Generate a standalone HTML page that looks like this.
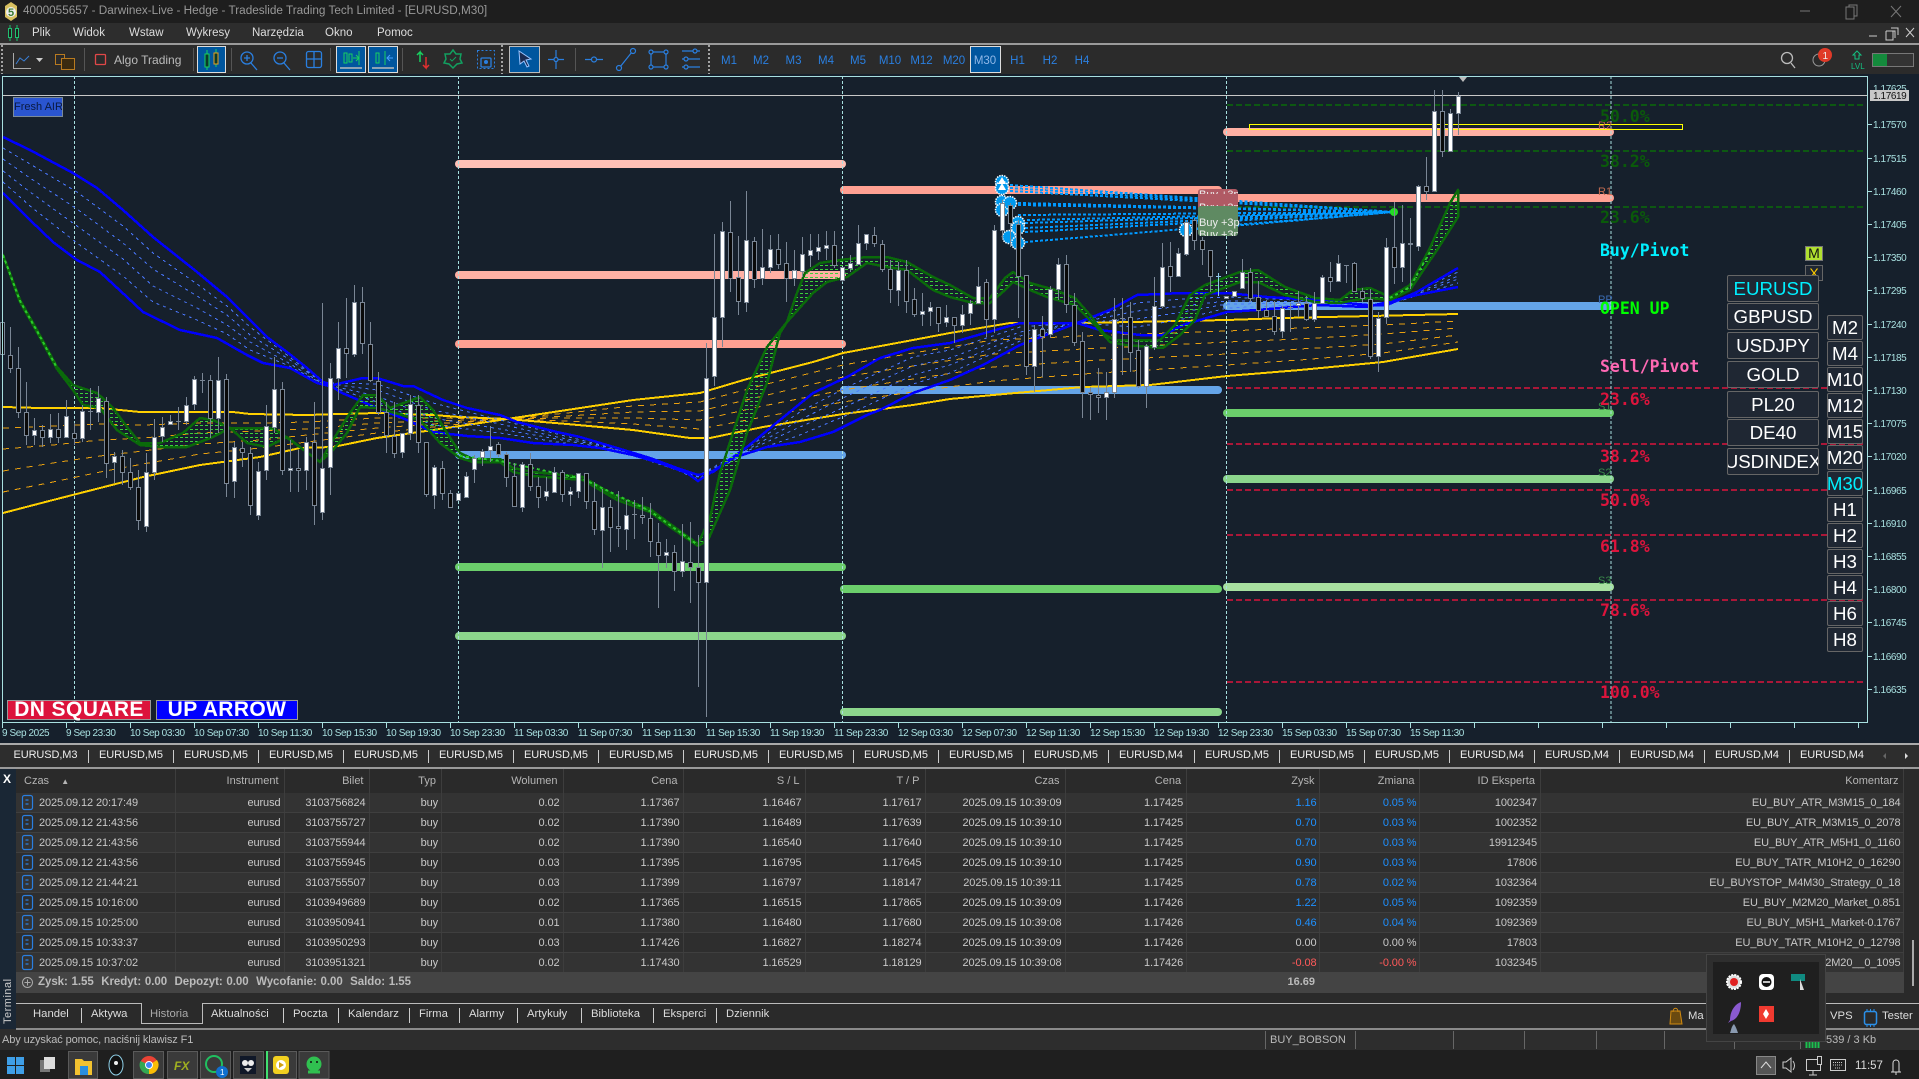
<!DOCTYPE html>
<html><head><meta charset="utf-8"><title>MT5</title>
<style>
html,body{margin:0;padding:0;background:#2d2d2d}
body{width:1919px;height:1079px;overflow:hidden;position:relative;font-family:"Liberation Sans",sans-serif;color:#ccc}
.a{position:absolute}
.t{position:absolute;white-space:nowrap;font-size:11.5px;line-height:14px}
.m{color:#ddd;top:26px}
.tab{position:absolute;top:748px;font-size:11px;color:#eee;white-space:nowrap;line-height:14px;letter-spacing:-.1px}
.pb,.tb{position:absolute;background:#1f2733;border:1px solid #666;box-sizing:border-box;color:#fff;font-size:18.7px;text-align:center;overflow:hidden;white-space:nowrap;border-radius:2px;display:flex;justify-content:center}
.pb{left:1727px;width:92px;height:27px;line-height:25px}
.tb{left:1827px;width:36px;height:25px;line-height:23px}
table{border-collapse:collapse;table-layout:fixed;position:absolute;left:16px;top:769px;width:1888px;font-size:11px;color:#c8c8c8}
td,th{padding:0 3px 0 0;text-align:right;font-weight:normal;white-space:nowrap;overflow:hidden;border-right:1px solid #3d3d3d}
th{height:24px;background:#2a2a2a;color:#b5b5b5;padding-right:5px}
td{height:19px;border-bottom:1px solid #3f3f3f;background:#2e2e2e;letter-spacing:-.1px}
tr.o td{background:#333}
td.b{color:#1e90ff}td.r{color:#ff5a5a}
td:first-child,th:first-child{text-align:left;padding-left:23px}
.bt{position:absolute;top:1007px;font-size:11.3px;color:#ddd;line-height:14px;white-space:nowrap}
</style></head><body>

<div class="a" style="left:0;top:0;width:1919px;height:23px;background:#1e1e1e"></div>
<svg class="a" style="left:2px;top:2px" width="18" height="20"><path d="M9 0l6 4v11l-6 4-6-4V4z" fill="#d8c060"/><circle cx="9" cy="10" r="5" fill="#eee"/><text x="6" y="14" font-size="11" font-weight="bold" fill="#3a7a30" font-family="Liberation Sans">5</text></svg>
<div class="t" style="left:23px;top:4px;color:#989898;font-size:11.75px">4000055657 - Darwinex-Live - Hedge - Tradeslide Trading Tech Limited - [EURUSD,M30]</div>

<div class="a" style="left:0;top:23px;width:1919px;height:20px;background:#2d2d2d"></div>
<svg class="a" style="left:7px;top:25px" width="14" height="16"><path d="M3 0v16M10 0v16" stroke="#20c070"/><rect x="1.5" y="3.5" width="3" height="9" fill="#1e1e1e" stroke="#20c070"/><rect x="8.5" y="3.5" width="3" height="9" fill="#1e1e1e" stroke="#20c070"/></svg>
<div class="t m" style="left:32px">Plik</div><div class="t m" style="left:73px">Widok</div><div class="t m" style="left:129px">Wstaw</div><div class="t m" style="left:186px">Wykresy</div><div class="t m" style="left:252px">Narzędzia</div><div class="t m" style="left:325px">Okno</div><div class="t m" style="left:377px">Pomoc</div>
<div class="a" style="left:0;top:43px;width:1919px;height:2px;background:#9a9a9a"></div>

<!-- window buttons -->
<svg class="a" style="left:1790px;top:0" width="129" height="45" fill="none" stroke="#777"><path d="M10 11h10M56 7h8v12h-8zM59 7V5h8v11h-3M101 6l10 11M111 6l-10 11"/><path stroke="#ccc" d="M79 36h8M96 31h9v7M101 28h7v7M96 31v9h7v-9M116 28l8 9M124 28l-8 9"/></svg>

<!-- toolbar -->
<svg class="a" style="left:0;top:45px" width="1919" height="29" viewBox="0 45 1919 29">
<rect x="0" y="45" width="1919" height="29" fill="#2b2b2b"/>
<g stroke="#ccc" stroke-dasharray="2 2" stroke-width="1.5"><path d="M2 45v29M502 45v29M709 45v29"/></g>
<g stroke="#555"><path d="M84.500 48v23M193.500 48v23M231.500 48v23M330.500 48v23M402.500 48v23M575.500 48v23"/></g>
<path d="M13.500 53v15.500H31" stroke="#aaa" fill="none"/><path d="M16 64l4-6 4 3 5-5" stroke="#3a7fd5" fill="none"/><path d="M36 58h7l-3.500 4z" fill="#ccc"/>
<rect x="55.500" y="54.500" width="9" height="10" fill="none" stroke="#b87a20"/><rect x="61.500" y="58.500" width="13" height="11" fill="#3a2a10" stroke="#b87a20"/>
<rect x="95.500" y="54.500" width="10" height="10" rx="1" fill="none" stroke="#e04848" stroke-width="1.300"/>
<text x="114" y="64" font-family="Liberation Sans" font-size="12" fill="#bbb">Algo Trading</text>
<rect x="197.500" y="46.500" width="28" height="26" fill="#00569e" stroke="#ddd"/><path d="M207 50v20M216 49v18" stroke="#18d060"/><rect x="205" y="54" width="4" height="13" fill="#0a3a2a" stroke="#18d060"/><rect x="214" y="53" width="4" height="11" fill="#0a3a2a" stroke="#e8a020"/>
<g fill="none" stroke="#2a7fe0" stroke-width="1.300"><circle cx="247" cy="58" r="6"/><path d="M251 63l6 7M244 58h6M247 55v6"/><circle cx="280" cy="58" r="6"/><path d="M284 63l6 7M277 58h6"/><rect x="306.500" y="51.500" width="15" height="16" rx="2"/><path d="M314 52v15M307 59h14"/></g>
<rect x="336.500" y="46.500" width="29" height="26" fill="#00569e" stroke="#ddd"/><rect x="368.500" y="46.500" width="29" height="26" fill="#00569e" stroke="#ddd"/>
<path d="M340 68h22M372 68h22" stroke="#bbb" stroke-width="1.500"/>
<g fill="none" stroke="#18d060"><rect x="344" y="53" width="3" height="10"/><rect x="349" y="54" width="3" height="8"/><rect x="376" y="53" width="3" height="10"/><path d="M353 58h6M359 51v14M385 51v14"/></g><path d="M356 55l3 3-3 3" stroke="#18d060" fill="none"/><path d="M393 58h-6m3-3l-3 3 3 3" stroke="#49a0ff" fill="none"/>
<path d="M420 62V52l-3 3m3-3l3 3" stroke="#18d060" fill="none" stroke-width="1.500"/><path d="M426 57v11l-3-3m3 3l3-3" stroke="#e03030" fill="none" stroke-width="1.500"/>
<path d="M453 50l3 4h5l-1 5 2 4-5 1-4 4-4-4-5-1 2-4-1-5h5z" fill="none" stroke="#12a060" stroke-width="1.500"/><path d="M450 59l2 2 4-4" stroke="#12a060" fill="none"/>
<rect x="477.500" y="50.500" width="17" height="18" fill="none" stroke="#2a7fe0" stroke-dasharray="2 2"/><rect x="481" y="58" width="10" height="9" rx="1" fill="none" stroke="#2a7fe0" stroke-width="1.300"/><circle cx="486" cy="62" r="2" fill="#2a7fe0"/>
<rect x="509.500" y="46.500" width="30" height="26" fill="#00569e" stroke="#bbb"/><path d="M519 51l12 8-5 1 3 6-2 1-3-6-4 3z" fill="#1a2a50" stroke="#9bc4ff"/>
<g stroke="#2a7fe0" fill="none" stroke-width="1.200"><path d="M556 50v19M548 59.500h16"/><circle cx="556" cy="59.500" r="2" fill="#2b2b2b"/><path d="M585 59.500h18"/><circle cx="594" cy="59.500" r="2.500" fill="#2b2b2b"/><path d="M620 67l12-15"/><circle cx="619" cy="68" r="2.500" fill="#2b2b2b"/><circle cx="633" cy="51" r="2.500" fill="#2b2b2b"/><rect x="651" y="52" width="15" height="15"/><g fill="#2b2b2b"><circle cx="651" cy="52" r="2"/><circle cx="666" cy="52" r="2"/><circle cx="651" cy="67" r="2"/><circle cx="666" cy="67" r="2"/></g><path d="M682 51h18M682 59h18M682 67h18"/><circle cx="686" cy="59" r="2" fill="#2b2b2b"/><circle cx="695" cy="51" r="2" fill="#2b2b2b"/><circle cx="686" cy="67" r="2" fill="#2b2b2b"/></g>
<rect x="970.500" y="46.500" width="30" height="26" fill="#00569e" stroke="#ddd"/>
<g font-family="Liberation Sans" font-size="11.500" fill="#2a7fe0" text-anchor="middle"><text x="729" y="64">M1</text><text x="761" y="64">M2</text><text x="793.500" y="64">M3</text><text x="826" y="64">M4</text><text x="858" y="64">M5</text><text x="890" y="64">M10</text><text x="921.500" y="64">M12</text><text x="954" y="64">M20</text><text x="985" y="64" fill="#8fb8e8">M30</text><text x="1017.500" y="64">H1</text><text x="1050" y="64">H2</text><text x="1082" y="64">H4</text></g>
<circle cx="1787" cy="58" r="5.500" fill="none" stroke="#bbb" stroke-width="1.300"/><path d="M1791 63l4 5" stroke="#bbb" stroke-width="1.300"/>
<circle cx="1819" cy="60" r="6" fill="none" stroke="#999"/><circle cx="1825" cy="55" r="7" fill="#e03a28"/><text x="1822.500" y="59" font-family="Liberation Sans" font-size="10" fill="#eee">1</text>
<path d="M1857 51l4 4h-2v4h-4v-4h-2z" fill="none" stroke="#14c080"/><text x="1851" y="69" font-family="Liberation Sans" font-size="8" fill="#14c080">LVL</text>
<rect x="1872.500" y="53.500" width="41" height="13" fill="#333" stroke="#777"/><rect x="1873" y="54" width="14" height="12" fill="#148a3c"/>
</svg>

<!-- chart -->
<svg class="a" style="left:0;top:74px" width="1919" height="671" viewBox="0 74 1919 671">
<defs>
<pattern id="pg" width="5" height="4" patternUnits="userSpaceOnUse"><path d="M0 1.500h3" stroke="#3ad03a" shape-rendering="crispEdges"/></pattern>
<clipPath id="c1"><rect x="1198" y="190" width="40" height="4"/></clipPath>
<clipPath id="c2"><rect x="1198" y="203" width="40" height="3"/></clipPath>
<clipPath id="c3"><rect x="1198" y="229" width="40" height="7"/></clipPath>
</defs>
<rect x="0" y="74" width="1919" height="671" fill="#16202c"/>
<!-- pivots -->
<g stroke-width="8" stroke-linecap="round" fill="none">
<path d="M459 164H842" stroke="#ffc0b6"/><path d="M459 275H842" stroke="#ffb0a4"/><path d="M459 344H842" stroke="#ffa092"/><path d="M459 455H842" stroke="#64a4e8"/><path d="M459 567H842" stroke="#6bce6b"/><path d="M459 636H842" stroke="#8cd68c"/>
<path d="M844 190H1218" stroke="#ffa092"/><path d="M844 390H1218" stroke="#64a4e8"/><path d="M844 589H1218" stroke="#6bce6b"/><path d="M844 712H1218" stroke="#8cd68c"/>
<path d="M1227 132H1610" stroke="#ffb0a4"/><path d="M1227 198H1610" stroke="#ffa092"/><path d="M1227 306H1610" stroke="#64a4e8"/><path d="M1227 413H1610" stroke="#6bce6b"/><path d="M1227 479H1610" stroke="#8cd68c"/><path d="M1227 587H1610" stroke="#a8e0a0"/>
</g>
<!-- fibs -->
<g fill="none" stroke-width="1.500" stroke-dasharray="6 3"><path d="M1227 105H1866M1227 151H1866M1227 207H1866" stroke="#0a6a0a"/><path d="M1227 388H1866M1227 444H1866M1227 490H1866M1227 535H1866M1227 600H1866M1227 682H1866" stroke="#dc143c"/></g>
<rect x="1249.500" y="124.500" width="433" height="5" fill="none" stroke="#ffff00"/>
<!-- grid vertical -->
<path d="M74.500 76V722M458.500 76V722M842.500 76V722M1226.500 76V722M1611 76V722" stroke="#a8e0e0" stroke-dasharray="3 2" fill="none"/>
<path d="M3 95.500H1867" stroke="#c8c8c8"/>
<!-- yellow band -->
<g fill="none" shape-rendering="crispEdges">
<g stroke="#e8a010" stroke-dasharray="6 6">
<polyline points="3,428 53,426 100,424 143,425 200,423 260,423 307,422 377,418 433,418 507,419 567,413 633,406 700,402 763,385 843,365 913,353 993,340 1083,336 1227,331 1300,328 1383,325 1458,321"/>
<polyline points="3,449 53,445 100,440 143,438 200,433 260,431 307,429 377,423 433,421 507,419 567,416 633,412 700,411 763,396 843,377 913,366 993,354 1083,349 1227,342 1300,339 1383,334 1458,328"/>
<polyline points="3,471 53,463 100,456 143,451 200,444 260,440 307,435 377,428 433,424 507,419 567,418 633,418 700,420 763,406 843,390 913,379 993,367 1083,361 1227,354 1300,349 1383,344 1458,335"/>
<polyline points="3,492 53,482 100,472 143,464 200,454 260,448 307,442 377,433 433,427 507,419 567,421 633,424 700,429 763,417 843,402 913,392 993,381 1083,374 1227,365 1300,360 1383,353 1458,342"/>
</g>
<g stroke="#ffd000" stroke-width="2">
<polyline points="3,407 40,408 100,408 140,412 200,412 233,412 250,414 307,415 377,413 433,415 460,417 507,419 567,410 633,400 700,393 747,379 813,362 843,353 913,340 950,333 1010,323 1083,323 1227,320 1283,318 1458,314"/>
<polyline points="3,513 53,500 100,488 143,477 200,465 260,457 300,448 333,447 377,438 433,430 460,426 507,419 567,424 633,430 690,438 710,438 763,427 843,414 913,405 950,399 993,395 1083,387 1150,385 1227,376 1300,370 1383,362 1458,349"/>
</g>
<!-- blue band -->
<g stroke="#4a78ff" stroke-dasharray="3 4">
<polyline points="3,148 30,164 77,192 123,226 153,253 197,284 227,306 250,327 287,355 323,383 377,384 433,403 500,420 557,434 617,449 677,468 698,476 747,448 800,412 847,387 913,357 950,350 1020,327 1077,323 1137,303 1183,299 1227,297 1317,301 1387,305 1458,272"/>
<polyline points="3,159 30,178 77,209 123,243 153,269 197,296 227,315 250,335 287,358 323,383 377,390 433,410 500,424 557,437 617,449 677,469 698,477 747,450 800,420 847,396 913,366 950,358 1020,332 1077,323 1137,311 1183,306 1227,301 1317,302 1387,305 1458,276"/>
<polyline points="3,171 30,192 77,226 123,259 153,286 197,308 227,325 250,342 287,362 323,384 377,396 433,418 500,429 557,439 617,450 677,469 698,479 747,451 800,427 847,406 913,375 950,365 1020,336 1077,323 1137,319 1183,312 1227,304 1317,303 1387,305 1458,279"/>
<polyline points="3,182 30,206 77,243 123,276 153,302 197,320 227,334 250,350 287,365 323,384 377,402 433,425 500,433 557,442 617,450 677,470 698,480 747,453 800,435 847,415 913,384 950,373 1020,341 1077,323 1137,327 1183,319 1227,308 1317,304 1387,305 1458,283"/>
</g>
<g stroke="#0000ff" stroke-width="2.500">
<polyline points="3,137 30,150 73,173 97,188 123,210 153,237 197,272 227,297 250,320 267,337 287,352 307,368 323,382 333,385 363,378 377,378 403,386 413,386 443,400 467,408 500,415 517,422 557,432 580,437 617,448 650,458 677,468 698,475 713,472 747,447 780,420 813,393 847,377 880,358 913,348 950,343 1020,323 1077,323 1110,310 1137,295 1183,293 1227,293 1267,297 1317,300 1367,305 1387,305 1417,292 1458,268"/>
<polyline points="3,193 30,220 53,242 77,260 100,272 127,297 143,312 180,330 217,338 247,355 263,363 290,368 317,383 333,387 340,392 377,408 407,420 433,432 467,436 500,438 533,443 573,445 600,448 633,455 660,463 687,473 698,481 710,473 733,458 767,447 800,442 833,432 867,415 880,410 913,393 950,380 983,365 1020,345 1077,323 1100,330 1140,335 1163,335 1183,325 1227,312 1257,310 1317,305 1367,307 1417,295 1458,287"/>
</g>
</g>
<!-- green band -->
<polygon fill="url(#pg)" stroke="#0a6a0a" stroke-width="2.500" stroke-linejoin="round" shape-rendering="crispEdges" points="3,255 20,300 37,330 57,367 73,385 97,393 113,408 127,427 140,443 160,443 183,433 200,418 213,420 230,428 260,428 273,428 293,442 320,462 333,440 350,413 363,395 377,395 390,408 420,397 433,410 447,433 460,453 473,459 500,459 513,468 533,472 583,477 617,497 650,509 673,526 698,544 710,518 720,473 747,390 767,347 787,322 797,293 805,273 820,263 840,260 867,257 887,257 907,262 933,277 950,285 973,298 990,298 1005,278 1013,272 1030,283 1055,290 1075,298 1090,315 1105,335 1115,340 1160,340 1175,325 1190,295 1205,285 1240,272 1258,270 1285,287 1315,298 1340,300 1353,290 1370,288 1390,297 1410,285 1430,248 1450,203 1458,190 1458,217 1437,250 1410,290 1390,300 1370,298 1355,300 1340,303 1315,302 1285,295 1258,282 1240,282 1205,295 1195,320 1180,335 1163,348 1125,345 1110,342 1095,325 1075,305 1047,297 1030,290 1013,282 1005,290 990,303 973,303 950,297 933,290 907,270 887,267 867,263 847,277 827,282 813,293 787,322 780,333 767,383 747,433 730,490 708,540 698,546 673,529 650,512 617,500 583,480 533,476 513,472 500,462 473,462 460,458 440,443 420,420 377,408 360,407 347,433 333,450 320,462 300,447 287,437 267,447 247,443 230,428 213,437 187,447 160,447 140,445 117,430 100,408 83,405 73,390 57,369 37,332 20,302 3,255"/>
<path d="M3 255L20 301 37 331 57 368M460 456L500 461 583 479 650 511 698 545M1390 298L1410 287 1430 252" stroke="#2cc82c" stroke-width="2" stroke-dasharray="3 3" fill="none" shape-rendering="crispEdges"/>
<!-- trade lines -->
<g stroke="#0099ff" stroke-width="2" stroke-dasharray="3 2" fill="none" shape-rendering="crispEdges"><path d="M1010 185L1394 212M1010 188L1394 212M1010 191L1394 212M1018 203L1394 212M1018 205L1394 212M1018 215L1394 212M1027 220L1394 212M1025 223L1394 212M1025 228L1394 212M1025 232L1394 212M1025 242L1394 212M1186 230L1394 212"/></g>
<g fill="#0099ee" stroke="#fff" stroke-width="1.500" stroke-dasharray="1.500 1"><circle cx="1002" cy="182" r="6.500"/><circle cx="1002" cy="188" r="6.500"/><circle cx="1002" cy="202" r="6.500"/><circle cx="1002" cy="210" r="6.500"/><circle cx="1010" cy="203" r="6.500"/><circle cx="1018" cy="223" r="6.500"/><circle cx="1018" cy="228" r="6.500"/><circle cx="1009" cy="237" r="6.500"/><circle cx="1018" cy="243" r="6.500"/><circle cx="1186" cy="230" r="6.500"/></g>
<path d="M1002 177l4 7h-8zM1002 183l4 7h-8z" fill="#fff"/>
<circle cx="1394" cy="212" r="4" fill="#22dd22"/>
<!-- wicks -->
<path stroke="#7a8695" fill="none" d="M10.500 327V373M18.500 347V418M26.500 382V445M34.500 418V445M42.500 425V447M50.500 414V443M58.500 413V443M66.500 400V438M74.500 423V445M82.500 405V442M90.500 388V430M98.500 386V422M106.500 397V478M114.500 452V483M122.500 450V485M130.500 458V490M138.500 470V530M146.500 453V532M154.500 419V480M162.500 417V442M170.500 415V425M178.500 407V430M186.500 397V425M194.500 376V410M202.500 373V393M210.500 375V438M218.500 357V433M226.500 374V497M234.500 442V498M242.500 442V467M250.500 447V515M258.500 462V520M266.500 405V480M274.500 357V433M282.500 382V475M290.500 440V492M298.500 450V492M306.500 437V490M314.500 402V525M322.500 303V520M330.500 363V495M338.500 322V400M346.500 298V378M354.500 285V357M362.500 287V354M370.500 322V382M378.500 372V415M386.500 402V453M394.500 402V458M402.500 433V458M410.500 395V440M418.500 395V453M426.500 442V497M434.500 465V509M442.500 461V500M450.500 490V507M458.500 493V500M466.500 472V498M474.500 455V483M482.500 449V466M490.500 426V462M498.500 442V457M506.500 452V487M514.500 463V507M522.500 462V512M530.500 453V491M538.500 477V508M546.500 477V501M554.500 467V493M562.500 470V502M570.500 487V506M578.500 473V498M586.500 473V509M594.500 482V535M602.500 489V568M610.500 500V552M618.500 491V547M626.500 500V550M634.500 500V539M642.500 497V524M650.500 503V557M658.500 523V608M666.500 539V568M674.500 545V591M682.500 524V577M690.500 522V603M698.500 535V687M706.500 343V717M714.500 234V386M722.500 222V347M730.500 201V292M738.500 236V315M746.500 191V312M754.500 237V288M762.500 229V285M770.500 235V273M778.500 234V269M786.500 242V302M794.500 250V286M802.500 237V277M810.500 234V267M818.500 234V260M826.500 231V260M834.500 231V268M842.500 267V282M850.500 255V272M858.500 225V265M866.500 234V250M874.500 227V247M882.500 240V272M890.500 260V303M898.500 262V306M906.500 260V313M914.500 288V317M922.500 293V326M930.500 302V326M938.500 307V332M946.500 305V327M954.500 317V343M962.500 305V333M970.500 300V325M978.500 267V304M986.500 279V337M994.500 225V333M1002.500 200V240M1010.500 203V247M1018.500 220V318M1026.500 275V375M1034.500 325V392M1042.500 316V377M1050.500 286V338M1058.500 258V300M1066.500 255V313M1074.500 293V346M1082.500 332V418M1090.500 387V420M1098.500 368V413M1106.500 372V420M1114.500 298V398M1122.500 298V375M1130.500 302V372M1138.500 340V388M1146.500 344V408M1154.500 277V350M1162.500 243V308M1170.500 242V292M1178.500 248V277M1186.500 220V256M1194.500 218V250M1202.500 237V265M1210.500 250V292M1242.500 259V289M1250.500 268V302M1258.500 281V318M1266.500 300V317M1274.500 301V335M1282.500 306V338M1290.500 303V332M1298.500 291V317M1306.500 296V321M1314.500 292V322M1322.500 275V303M1330.500 262V292M1338.500 255V282M1346.500 265V283M1354.500 262V291M1362.500 288V302M1370.500 289V359M1378.500 312V372M1386.500 238V324M1394.500 202V284M1402.500 205V282M1410.500 218V289M1418.500 185V251M1426.500 157V200M1434.500 90V191M1442.500 90V157M1450.500 109V151M1458.500 92V135M88 411.500h5M176 421.500h5M200 380.500h5M632 514.500h5M1120 318.500h5M1288 307.500h5M1344 265.500h5"/>
<path stroke="#8fc8e8" fill="none" d="M1218.500 273V296M1216 276.500h5"/>
<!-- white bodies -->
<path fill="#fff" stroke="#7a8695" d="M32.500 430.500h4V435.500h-4zM48.500 429.500h4V437.500h-4zM64.500 416.500h4V437.500h-4zM80.500 411.500h4V438.500h-4zM96.500 398.500h4V412.500h-4zM112.500 456.500h4V462.500h-4zM144.500 472.500h4V526.500h-4zM152.500 437.500h4V472.500h-4zM160.500 427.500h4V436.500h-4zM168.500 421.500h4V424.500h-4zM184.500 405.500h4V421.500h-4zM192.500 379.500h4V404.500h-4zM216.500 380.500h4V418.500h-4zM232.500 447.500h4V481.500h-4zM256.500 471.500h4V515.500h-4zM264.500 426.500h4V470.500h-4zM272.500 389.500h4V427.500h-4zM288.500 468.500h4V470.500h-4zM304.500 442.500h4V470.500h-4zM320.500 468.500h4V512.500h-4zM328.500 378.500h4V467.500h-4zM336.500 348.500h4V378.500h-4zM352.500 302.500h4V354.500h-4zM400.500 433.500h4V452.500h-4zM408.500 404.500h4V433.500h-4zM432.500 467.500h4V495.500h-4zM456.500 493.500h4V500.500h-4zM464.500 476.500h4V497.500h-4zM472.500 458.500h4V469.500h-4zM480.500 451.500h4V457.500h-4zM488.500 446.500h4V450.500h-4zM520.500 464.500h4V507.500h-4zM544.500 491.500h4V496.500h-4zM552.500 472.500h4V492.500h-4zM568.500 491.500h4V494.500h-4zM576.500 473.500h4V491.500h-4zM600.500 507.500h4V530.500h-4zM624.500 515.500h4V529.500h-4zM664.500 552.500h4V555.500h-4zM680.500 561.500h4V571.500h-4zM704.500 378.500h4V582.500h-4zM712.500 317.500h4V376.500h-4zM720.500 231.500h4V317.500h-4zM744.500 240.500h4V302.500h-4zM760.500 267.500h4V278.500h-4zM768.500 249.500h4V267.500h-4zM792.500 270.500h4V278.500h-4zM800.500 254.500h4V271.500h-4zM808.500 250.500h4V255.500h-4zM816.500 247.500h4V251.500h-4zM824.500 245.500h4V248.500h-4zM840.500 267.500h4V280.500h-4zM848.500 263.500h4V268.500h-4zM856.500 243.500h4V264.500h-4zM864.500 234.500h4V243.500h-4zM896.500 270.500h4V290.500h-4zM920.500 311.500h4V314.500h-4zM928.500 307.500h4V311.500h-4zM944.500 317.500h4V322.500h-4zM960.500 314.500h4V325.500h-4zM968.500 303.500h4V313.500h-4zM976.500 286.500h4V303.500h-4zM992.500 230.500h4V319.500h-4zM1000.500 203.500h4V230.500h-4zM1032.500 329.500h4V366.500h-4zM1048.500 289.500h4V334.500h-4zM1056.500 264.500h4V289.500h-4zM1104.500 392.500h4V397.500h-4zM1112.500 319.500h4V392.500h-4zM1144.500 346.500h4V386.500h-4zM1152.500 306.500h4V347.500h-4zM1160.500 267.500h4V306.500h-4zM1176.500 253.500h4V276.500h-4zM1184.500 222.500h4V254.500h-4zM1224.500 296.500h4V298.500h-4zM1232.500 291.500h4V296.500h-4zM1240.500 272.500h4V288.500h-4zM1280.500 308.500h4V331.500h-4zM1296.500 303.500h4V305.500h-4zM1312.500 303.500h4V319.500h-4zM1320.500 277.500h4V303.500h-4zM1336.500 263.500h4V281.500h-4zM1376.500 318.500h4V356.500h-4zM1384.500 247.500h4V317.500h-4zM1400.500 243.500h4V267.500h-4zM1416.500 186.500h4V246.500h-4zM1432.500 111.500h4V191.500h-4zM1448.500 113.500h4V151.500h-4zM1456.500 96.500h4V113.500h-4z"/>
<!-- black bodies -->
<path fill="#0a0a0a" stroke="#7a8695" d="M.5 322.500h4V354.500h-4zM8.500 355.500h4V368.500h-4zM16.500 368.500h4V412.500h-4zM24.500 412.500h4V435.500h-4zM40.500 430.500h4V437.500h-4zM56.500 429.500h4V437.500h-4zM72.500 433.500h4V438.500h-4zM104.500 401.500h4V463.500h-4zM120.500 456.500h4V472.500h-4zM128.500 472.500h4V487.500h-4zM136.500 487.500h4V520.500h-4zM208.500 380.500h4V418.500h-4zM224.500 379.500h4V483.500h-4zM240.500 448.500h4V452.500h-4zM248.500 453.500h4V505.500h-4zM280.500 389.500h4V470.500h-4zM296.500 468.500h4V470.500h-4zM312.500 442.500h4V505.500h-4zM344.500 348.500h4V353.500h-4zM360.500 302.500h4V343.500h-4zM368.500 344.500h4V380.500h-4zM376.500 381.500h4V412.500h-4zM384.500 412.500h4V435.500h-4zM392.500 436.500h4V453.500h-4zM416.500 405.500h4V442.500h-4zM424.500 442.500h4V494.500h-4zM440.500 468.500h4V493.500h-4zM448.500 493.500h4V507.500h-4zM496.500 444.500h4V454.500h-4zM504.500 454.500h4V477.500h-4zM512.500 476.500h4V506.500h-4zM528.500 464.500h4V486.500h-4zM536.500 486.500h4V497.500h-4zM560.500 472.500h4V494.500h-4zM584.500 473.500h4V501.500h-4zM592.500 501.500h4V529.500h-4zM608.500 507.500h4V527.500h-4zM616.500 526.500h4V528.500h-4zM640.500 515.500h4V517.500h-4zM648.500 518.500h4V541.500h-4zM656.500 542.500h4V555.500h-4zM672.500 552.500h4V571.500h-4zM688.500 562.500h4V567.500h-4zM696.500 567.500h4V582.500h-4zM728.500 232.500h4V278.500h-4zM736.500 277.500h4V301.500h-4zM752.500 241.500h4V279.500h-4zM776.500 249.500h4V264.500h-4zM784.500 263.500h4V278.500h-4zM832.500 245.500h4V265.500h-4zM872.500 235.500h4V243.500h-4zM880.500 244.500h4V269.500h-4zM888.500 269.500h4V289.500h-4zM904.500 270.500h4V301.500h-4zM912.500 299.500h4V314.500h-4zM936.500 307.500h4V323.500h-4zM952.500 317.500h4V325.500h-4zM984.500 282.500h4V319.500h-4zM1008.500 205.500h4V223.500h-4zM1016.500 224.500h4V276.500h-4zM1024.500 275.500h4V366.500h-4zM1040.500 329.500h4V336.500h-4zM1064.500 264.500h4V304.500h-4zM1072.500 305.500h4V342.500h-4zM1080.500 341.500h4V392.500h-4zM1088.500 392.500h4V394.500h-4zM1096.500 395.500h4V397.500h-4zM1128.500 317.500h4V352.500h-4zM1136.500 350.500h4V386.500h-4zM1168.500 266.500h4V276.500h-4zM1192.500 220.500h4V240.500h-4zM1200.500 240.500h4V249.500h-4zM1208.500 250.500h4V276.500h-4zM1248.500 272.500h4V298.500h-4zM1256.500 297.500h4V310.500h-4zM1264.500 310.500h4V316.500h-4zM1272.500 316.500h4V331.500h-4zM1304.500 303.500h4V319.500h-4zM1328.500 277.500h4V281.500h-4zM1352.500 263.500h4V291.500h-4zM1360.500 291.500h4V298.500h-4zM1368.500 299.500h4V356.500h-4zM1392.500 247.500h4V267.500h-4zM1408.500 243.500h4V244.500h-4zM1424.500 186.500h4V191.500h-4zM1440.500 111.500h4V151.500h-4z"/>
<!-- labels box -->
<rect x="1198" y="189" width="40" height="24" rx="3" fill="#b05a64"/>
<rect x="1198" y="206" width="40" height="30" rx="3" fill="#5f8a62"/>
<g font-family="Liberation Sans" font-size="11" fill="#eee"><g clip-path="url(#c1)"><text x="1199" y="198">Buy +3p</text></g><g clip-path="url(#c2)"><text x="1199" y="211">Buy +3p</text></g><text x="1199" y="226">Buy +3p</text><g clip-path="url(#c3)"><text x="1199" y="238">Buy +3p</text></g></g>
<!-- pivot labels -->
<g font-family="Liberation Sans" font-size="11"><text x="1598" y="129" fill="#c06a50">R2</text><text x="1598" y="195" fill="#c06a50">R1</text><text x="1598" y="303" fill="#3a6ab0">PP</text><text x="1598" y="410" fill="#3a8a4a">S1</text><text x="1598" y="476" fill="#3a8a4a">S2</text><text x="1598" y="584" fill="#3a8a4a">S3</text></g>
<!-- fib text -->
<g font-family="DejaVu Sans Mono" font-weight="bold" font-size="16.500"><g fill="#0a5a0a"><text x="1600" y="122">50.0%</text><text x="1600" y="167">38.2%</text><text x="1600" y="223">23.6%</text></g>
<text x="1600" y="256" fill="#00f0ff">Buy/Pivot</text><text x="1600" y="314" fill="#00ff00">OPEN UP</text><text x="1600" y="372" fill="#ff69b4">Sell/Pivot</text>
<g fill="#dc143c"><text x="1600" y="405">23.6%</text><text x="1600" y="462">38.2%</text><text x="1600" y="506">50.0%</text><text x="1600" y="552">61.8%</text><text x="1600" y="616">78.6%</text><text x="1600" y="698">100.0%</text></g></g>
<!-- frame -->
<path d="M2.500 76.500H1867.500V722.500H2.500z" fill="none" stroke="#a8e0e0"/>
<path d="M1463 77h8l-4 5z" fill="#bbb" transform="translate(-4)"/>
<path stroke="#a8e0e0" d="M1868 124.500h4M1868 158.500h4M1868 191.500h4M1868 224.500h4M1868 257.500h4M1868 290.500h4M1868 324.500h4M1868 357.500h4M1868 390.500h4M1868 423.500h4M1868 456.500h4M1868 490.500h4M1868 523.500h4M1868 556.500h4M1868 589.500h4M1868 622.500h4M1868 656.500h4M1868 689.500h4M2.500 723v5M66.500 723v5M130.500 723v5M194.500 723v5M258.500 723v5M322.500 723v5M386.500 723v5M450.500 723v5M514.500 723v5M578.500 723v5M642.500 723v5M706.500 723v5M770.500 723v5M834.500 723v5M898.500 723v5M962.500 723v5M1026.500 723v5M1090.500 723v5M1154.500 723v5M1218.500 723v5M1282.500 723v5M1346.500 723v5M1410.500 723v5M1474.500 723v5M1538.500 723v5M1602.500 723v5M1666.500 723v5M1730.500 723v5M1794.500 723v5M1858.500 723v5"/>
<g font-family="Liberation Sans" font-size="10" fill="#a8e0e0" letter-spacing="-.4"><text x="1873" y="128">1.17570</text><text x="1873" y="162">1.17515</text><text x="1873" y="195">1.17460</text><text x="1873" y="228">1.17405</text><text x="1873" y="261">1.17350</text><text x="1873" y="294">1.17295</text><text x="1873" y="328">1.17240</text><text x="1873" y="361">1.17185</text><text x="1873" y="394">1.17130</text><text x="1873" y="427">1.17075</text><text x="1873" y="460">1.17020</text><text x="1873" y="494">1.16965</text><text x="1873" y="527">1.16910</text><text x="1873" y="560">1.16855</text><text x="1873" y="593">1.16800</text><text x="1873" y="626">1.16745</text><text x="1873" y="660">1.16690</text><text x="1873" y="693">1.16635</text><text x="1873" y="92">1.17625</text>
<text x="2" y="736">9 Sep 2025</text><text x="66" y="736">9 Sep 23:30</text><text x="130" y="736">10 Sep 03:30</text><text x="194" y="736">10 Sep 07:30</text><text x="258" y="736">10 Sep 11:30</text><text x="322" y="736">10 Sep 15:30</text><text x="386" y="736">10 Sep 19:30</text><text x="450" y="736">10 Sep 23:30</text><text x="514" y="736">11 Sep 03:30</text><text x="578" y="736">11 Sep 07:30</text><text x="642" y="736">11 Sep 11:30</text><text x="706" y="736">11 Sep 15:30</text><text x="770" y="736">11 Sep 19:30</text><text x="834" y="736">11 Sep 23:30</text><text x="898" y="736">12 Sep 03:30</text><text x="962" y="736">12 Sep 07:30</text><text x="1026" y="736">12 Sep 11:30</text><text x="1090" y="736">12 Sep 15:30</text><text x="1154" y="736">12 Sep 19:30</text><text x="1218" y="736">12 Sep 23:30</text><text x="1282" y="736">15 Sep 03:30</text><text x="1346" y="736">15 Sep 07:30</text><text x="1410" y="736">15 Sep 11:30</text></g>
<rect x="1870" y="90" width="39" height="11" fill="#c8c8c8"/><text x="1873" y="99" font-family="Liberation Sans" font-size="10" fill="#111" letter-spacing="-.4">1.17619</text>
</svg>

<!-- chart buttons -->
<div class="a" style="left:13px;top:97px;width:50px;height:20px;background:#2a55d0;border:1px solid #7a8a99;box-sizing:border-box;color:#0a1a40;font-size:11px;line-height:18px;text-align:center;white-space:nowrap;overflow:hidden">Fresh AIR</div>
<div class="a" style="left:7px;top:700px;width:144px;height:20px;background:#dc143c;border:1px solid #999;box-sizing:border-box;color:#fff;font-weight:bold;font-size:21px;line-height:18px;text-align:center;letter-spacing:.4px;white-space:nowrap">DN SQUARE</div>
<div class="a" style="left:156px;top:700px;width:142px;height:20px;background:#0000ff;border:1px solid #999;box-sizing:border-box;color:#fff;font-weight:bold;font-size:21px;line-height:18px;text-align:center;letter-spacing:.4px;white-space:nowrap">UP ARROW</div>

<div class="a" style="left:1805px;top:246px;width:18px;height:15px;background:#b0e030;border:1px solid #777;box-sizing:border-box;color:#111;font-size:14px;line-height:13px;text-align:center">M</div>
<div class="a" style="left:1805px;top:265px;width:18px;height:16px;background:#1f2733;border:1px solid #666;box-sizing:border-box;color:#ffcc00;font-size:14px;line-height:14px;text-align:center">X</div>
<div class="pb" style="top:275px;color:#00f0ff">EURUSD</div><div class="pb" style="top:303px">GBPUSD</div><div class="pb" style="top:332px">USDJPY</div><div class="pb" style="top:361px">GOLD</div><div class="pb" style="top:391px">PL20</div><div class="pb" style="top:419px">DE40</div><div class="pb" style="top:448px">USDINDEX</div>
<div class="tb" style="top:315px">M2</div><div class="tb" style="top:341px">M4</div><div class="tb" style="top:367px">M10</div><div class="tb" style="top:393px">M12</div><div class="tb" style="top:419px">M15</div><div class="tb" style="top:445px">M20</div><div class="tb" style="top:471px;color:#00f0ff">M30</div><div class="tb" style="top:497px">H1</div><div class="tb" style="top:523px">H2</div><div class="tb" style="top:549px">H3</div><div class="tb" style="top:575px">H4</div><div class="tb" style="top:601px">H6</div><div class="tb" style="top:627px">H8</div>

<!-- chart tabs -->
<div class="a" style="left:0;top:743px;width:1919px;height:2px;background:#aaa"></div>
<div class="a" style="left:0;top:745px;width:1919px;height:22px;background:#2d2d2d"></div>
<div class="a" style="left:0;top:767px;width:1919px;height:2px;background:#9a9a9a"></div>
<div class="tab" style="left:13.500px">EURUSD,M3</div><div class="tab" style="left:99px">EURUSD,M5</div><div class="tab" style="left:184px">EURUSD,M5</div><div class="tab" style="left:269px">EURUSD,M5</div><div class="tab" style="left:354px">EURUSD,M5</div><div class="tab" style="left:439px">EURUSD,M5</div><div class="tab" style="left:524px">EURUSD,M5</div><div class="tab" style="left:609px">EURUSD,M5</div><div class="tab" style="left:694px">EURUSD,M5</div><div class="tab" style="left:779px">EURUSD,M5</div><div class="tab" style="left:864px">EURUSD,M5</div><div class="tab" style="left:949px">EURUSD,M5</div><div class="tab" style="left:1034px">EURUSD,M5</div><div class="tab" style="left:1119px">EURUSD,M4</div><div class="tab" style="left:1205px">EURUSD,M5</div><div class="tab" style="left:1290px">EURUSD,M5</div><div class="tab" style="left:1375px">EURUSD,M5</div><div class="tab" style="left:1460px">EURUSD,M4</div><div class="tab" style="left:1545px">EURUSD,M4</div><div class="tab" style="left:1630px">EURUSD,M4</div><div class="tab" style="left:1715px">EURUSD,M4</div><div class="tab" style="left:1800px">EURUSD,M4</div>
<svg class="a" style="left:0;top:745px" width="1919" height="22"><path stroke="#ccc" d="M88.500 5v13M173.500 5v13M258.500 5v13M343.500 5v13M428.500 5v13M513.500 5v13M598.500 5v13M683.500 5v13M768.500 5v13M853.500 5v13M938.500 5v13M1023.500 5v13M1108.500 5v13M1194.500 5v13M1279.500 5v13M1364.500 5v13M1449.500 5v13M1534.500 5v13M1619.500 5v13M1704.500 5v13M1789.500 5v13"/><path d="M1886 8l-3 3 3 3z" fill="#666"/><path d="M1905 8l3 3-3 3z" fill="#ddd"/></svg>

<!-- terminal -->
<div class="a" style="left:0;top:769px;width:16px;height:260px;background:#1a2735"></div>
<div class="t" style="left:3px;top:772px;color:#fff;font-weight:bold;font-size:12px">X</div>
<div class="a" style="left:16px;top:769px;width:1903px;height:260px;background:#2a2a2a"></div>
<div class="t" style="left:-15px;top:994px;width:46px;transform:rotate(-90deg);font-size:11px;color:#ccc;letter-spacing:.5px;text-align:left">Terminal</div>
<table>
<colgroup><col style="width:159px"><col style="width:109px"><col style="width:85px"><col style="width:72.500px"><col style="width:121.500px"><col style="width:120px"><col style="width:122px"><col style="width:120px"><col style="width:140px"><col style="width:121.600px"><col style="width:133.400px"><col style="width:100px"><col style="width:120.500px"><col style="width:363.500px"></colgroup>
<tr><th style="padding-left:8px">Czas &nbsp; &nbsp;<span style="font-size:8px">▲</span></th><th>Instrument</th><th>Bilet</th><th>Typ</th><th>Wolumen</th><th>Cena</th><th>S / L</th><th>T / P</th><th>Czas</th><th>Cena</th><th>Zysk</th><th>Zmiana</th><th>ID Eksperta</th><th>Komentarz</th></tr>
<tr class="o"><td>2025.09.12 20:17:49</td><td>eurusd</td><td>3103756824</td><td>buy</td><td>0.02</td><td>1.17367</td><td>1.16467</td><td>1.17617</td><td>2025.09.15 10:39:09</td><td>1.17425</td><td class="b">1.16</td><td class="b">0.05 %</td><td>1002347</td><td>EU_BUY_ATR_M3M15_0_184</td></tr>
<tr><td>2025.09.12 21:43:56</td><td>eurusd</td><td>3103755727</td><td>buy</td><td>0.02</td><td>1.17390</td><td>1.16489</td><td>1.17639</td><td>2025.09.15 10:39:10</td><td>1.17425</td><td class="b">0.70</td><td class="b">0.03 %</td><td>1002352</td><td>EU_BUY_ATR_M3M15_0_2078</td></tr>
<tr class="o"><td>2025.09.12 21:43:56</td><td>eurusd</td><td>3103755944</td><td>buy</td><td>0.02</td><td>1.17390</td><td>1.16540</td><td>1.17640</td><td>2025.09.15 10:39:10</td><td>1.17425</td><td class="b">0.70</td><td class="b">0.03 %</td><td>19912345</td><td>EU_BUY_ATR_M5H1_0_1160</td></tr>
<tr><td>2025.09.12 21:43:56</td><td>eurusd</td><td>3103755945</td><td>buy</td><td>0.03</td><td>1.17395</td><td>1.16795</td><td>1.17645</td><td>2025.09.15 10:39:10</td><td>1.17425</td><td class="b">0.90</td><td class="b">0.03 %</td><td>17806</td><td>EU_BUY_TATR_M10H2_0_16290</td></tr>
<tr class="o"><td>2025.09.12 21:44:21</td><td>eurusd</td><td>3103755507</td><td>buy</td><td>0.03</td><td>1.17399</td><td>1.16797</td><td>1.18147</td><td>2025.09.15 10:39:11</td><td>1.17425</td><td class="b">0.78</td><td class="b">0.02 %</td><td>1032364</td><td>EU_BUYSTOP_M4M30_Strategy_0_18</td></tr>
<tr><td>2025.09.15 10:16:00</td><td>eurusd</td><td>3103949689</td><td>buy</td><td>0.02</td><td>1.17365</td><td>1.16515</td><td>1.17865</td><td>2025.09.15 10:39:09</td><td>1.17426</td><td class="b">1.22</td><td class="b">0.05 %</td><td>1092359</td><td>EU_BUY_M2M20_Market_0.851</td></tr>
<tr class="o"><td>2025.09.15 10:25:00</td><td>eurusd</td><td>3103950941</td><td>buy</td><td>0.01</td><td>1.17380</td><td>1.16480</td><td>1.17680</td><td>2025.09.15 10:39:08</td><td>1.17426</td><td class="b">0.46</td><td class="b">0.04 %</td><td>1092369</td><td>EU_BUY_M5H1_Market-0.1767</td></tr>
<tr><td>2025.09.15 10:33:37</td><td>eurusd</td><td>3103950293</td><td>buy</td><td>0.03</td><td>1.17426</td><td>1.16827</td><td>1.18274</td><td>2025.09.15 10:39:09</td><td>1.17426</td><td>0.00</td><td>0.00 %</td><td>17803</td><td>EU_BUY_TATR_M10H2_0_12798</td></tr>
<tr class="o"><td>2025.09.15 10:37:02</td><td>eurusd</td><td>3103951321</td><td>buy</td><td>0.02</td><td>1.17430</td><td>1.16529</td><td>1.18129</td><td>2025.09.15 10:39:08</td><td>1.17426</td><td class="r">-0.08</td><td class="r">-0.00 %</td><td>1032345</td><td>EU_BUY_ATR_M2M20__0_1095</td></tr>
</table>
<svg class="a" style="left:21px;top:793px" width="14" height="180" fill="none" stroke="#2a7fe0" stroke-width="1.200"><g id="n"><rect x="1.500" y="2.500" width="10" height="14" rx="2"/><path d="M4.500 7h3M4.500 11h3"/></g><use href="#n" y="20"/><use href="#n" y="40"/><use href="#n" y="60"/><use href="#n" y="80"/><use href="#n" y="100"/><use href="#n" y="120"/><use href="#n" y="140"/><use href="#n" y="160"/></svg>
<!-- summary -->
<div class="a" style="left:16px;top:972px;width:1888px;height:21px;background:#444"></div>
<svg class="a" style="left:21px;top:976px" width="13" height="13" fill="none" stroke="#aaa"><circle cx="6.500" cy="6.500" r="5"/><path d="M6.500 3.500v6M3.500 6.500h6"/></svg>
<div class="t" style="left:38px;top:975px;font-size:11.5px;font-weight:bold;color:#bbb;word-spacing:.6px;letter-spacing:-.05px">Zysk: 1.55 &nbsp;Kredyt: 0.00 &nbsp;Depozyt: 0.00 &nbsp;Wycofanie: 0.00 &nbsp;Saldo: 1.55</div>
<div class="t" style="left:1285px;top:975px;width:30px;text-align:right;font-size:11px;font-weight:bold;color:#bbb">16.69</div>
<div class="a" style="left:1912px;top:940px;width:2px;height:46px;background:#aaa"></div>
<!-- bottom tabs -->
<div class="a" style="left:16px;top:1003px;width:1903px;height:1px;background:#bbb"></div>
<div class="a" style="left:16px;top:1028px;width:1903px;height:2px;background:#8a8a8a"></div>
<div class="a" style="left:141px;top:1003px;width:60px;height:20px;background:#2a2a2a;border:1px solid #bbb;border-top:none"></div>
<div class="bt" style="left:33px">Handel</div><div class="bt" style="left:91px">Aktywa</div><div class="bt" style="left:150px;color:#aaa">Historia</div><div class="bt" style="left:211px">Aktualności</div><div class="bt" style="left:293px">Poczta</div><div class="bt" style="left:348px">Kalendarz</div><div class="bt" style="left:419px">Firma</div><div class="bt" style="left:469px">Alarmy</div><div class="bt" style="left:527px">Artykuły</div><div class="bt" style="left:591px">Biblioteka</div><div class="bt" style="left:663px">Eksperci</div><div class="bt" style="left:726px">Dziennik</div>
<svg class="a" style="left:0;top:1003px" width="1919" height="25"><path stroke="#ccc" d="M81.500 5v15M283.500 5v15M338.500 5v15M409.500 5v15M459.500 5v15M517.500 5v15M581.500 5v15M653.500 5v15M716.500 5v15"/><path d="M1671 8h9l2 13h-12z" fill="#6a4a10" stroke="#d08a10"/><path d="M1673 9c0-5 5-5 5 0" fill="none" stroke="#d08a10"/><rect x="1864.500" y="8.500" width="12" height="13" rx="2" fill="none" stroke="#2a8fe8" stroke-width="1.500"/><path d="M1867 6v2M1870.500 6v2M1874 6v2M1867 22v2M1870.500 22v2M1874 22v2" stroke="#2a8fe8"/></svg>
<div class="bt" style="left:1688px;top:1009px">Ma</div><div class="bt" style="left:1830px;top:1009px">VPS</div><div class="bt" style="left:1882px;top:1009px">Tester</div>
<!-- status -->
<div class="a" style="left:0;top:1030px;width:1919px;height:20px;background:#2d2d2d"></div>
<div class="t" style="left:2px;top:1033px;font-size:11px;color:#bbb;letter-spacing:-.1px">Aby uzyskać pomoc, naciśnij klawisz F1</div>
<div class="t" style="left:1270px;top:1033px;font-size:11px;color:#bbb">BUY_BOBSON</div>
<div class="t" style="left:1826px;top:1033px;font-size:11px;color:#bbb">539 / 3 Kb</div>
<svg class="a" style="left:1200px;top:1030px" width="719" height="20"><path stroke="#666" d="M65.500 1v18M155.500 1v18M253.500 1v18M324.500 1v18M396.500 1v18M464.500 1v18M534.500 1v18M600.500 1v18"/><path d="M606.500 12v6M609.500 12v6M612.500 12v6M615.500 12v6M618.500 12v6" stroke="#1cc050" stroke-width="2"/></svg>
<!-- taskbar -->
<div class="a" style="left:0;top:1050px;width:1919px;height:29px;background:#1f1f1f"></div>
<svg class="a" style="left:0;top:1050px" width="1919" height="29" viewBox="0 1050 1919 29">
<g fill="#3a3a3a" stroke="#5a5a5a"><rect x="68.500" y="1051.500" width="29" height="27"/><rect x="133.500" y="1051.500" width="30" height="27"/><rect x="167.500" y="1051.500" width="30" height="27"/><rect x="200.500" y="1051.500" width="30" height="27"/><rect x="233.500" y="1051.500" width="30" height="27"/><rect x="266.500" y="1051.500" width="30" height="27"/><rect x="299" y="1051.500" width="30" height="27"/></g>
<rect x="266" y="1051" width="2" height="28" fill="#40e070"/>
<g fill="#3f9fe8"><rect x="7" y="1057" width="8" height="8"/><rect x="16" y="1057" width="8" height="8"/><rect x="7" y="1066" width="8" height="8"/><rect x="16" y="1066" width="8" height="8"/></g>
<rect x="40" y="1060" width="10" height="12" fill="#777"/><rect x="44" y="1057" width="11" height="12" fill="#ddd"/>
<path d="M75 1059h7l2 2h8v14H75z" fill="#f2c230"/><rect x="80" y="1066" width="8" height="9" fill="#2a8fe0"/>
<ellipse cx="116" cy="1065" rx="7" ry="10" fill="#111" stroke="#8fd0e8"/><circle cx="116" cy="1063" r="2" fill="#eee"/>
<circle cx="149" cy="1065" r="9" fill="#ea4335"/><path d="M149 1065L157 1060A9 9 0 0 1 149 1074Z" fill="#fbbc05"/><path d="M149 1065L149 1074A9 9 0 0 1 140.500 1061Z" fill="#34a853"/><circle cx="149" cy="1065" r="3.500" fill="#4285f4" stroke="#fff"/>
<text x="174" y="1070" font-family="Liberation Sans" font-weight="bold" font-style="italic" font-size="12" fill="#a0b020">FX</text>
<circle cx="214" cy="1064" r="8" fill="none" stroke="#20c060" stroke-width="2"/><circle cx="222" cy="1072" r="6" fill="#1070d0"/><text x="220" y="1075" font-family="Liberation Sans" font-size="8" fill="#fff">1</text>
<rect x="240" y="1056" width="16" height="18" fill="#101828"/><circle cx="245" cy="1063" r="3" fill="#eee"/><circle cx="251" cy="1063" r="3" fill="#eee"/><path d="M244 1068h8l-4 4z" fill="#ccc"/>
<rect x="273" y="1056" width="16" height="18" rx="3" fill="#f2d020"/><circle cx="281" cy="1065" r="5" fill="#fff"/><path d="M279 1062l5 3-5 3z" fill="#d0a010"/>
<circle cx="314" cy="1064" r="7.500" fill="#30c050"/><path d="M308 1072h12" stroke="#30c050" stroke-width="3"/><circle cx="311" cy="1062" r="1" fill="#111"/><circle cx="317" cy="1062" r="1" fill="#111"/>
<rect x="1756.500" y="1056.500" width="19" height="18" fill="#555" stroke="#888"/><path d="M1761 1068l5-6 5 6" stroke="#ddd" fill="none"/>
<path d="M1783 1062h3l5-4v14l-5-4h-3z" fill="none" stroke="#ccc"/><path d="M1793 1061c2 3 2 6 0 9" stroke="#ccc" fill="none"/>
<rect x="1806.500" y="1059.500" width="14" height="11" fill="none" stroke="#ccc"/><rect x="1817.500" y="1056.500" width="4" height="8" fill="#1f1f1f" stroke="#ccc"/><path d="M1813 1071v4M1809 1075h8" stroke="#ccc"/>
<rect x="1830.500" y="1059.500" width="15" height="11" fill="none" stroke="#ccc"/><path d="M1833 1062.500h10M1833 1065h10M1835 1068h6" stroke="#ccc" stroke-dasharray="1 1"/>
<text x="1855" y="1069" font-family="Liberation Sans" font-size="11.500" fill="#ddd">11:57</text>
<path d="M1891 1072h10M1893 1072v-9c0-4 6-4 6 0v9M1896 1072v3" stroke="#ddd" fill="none"/>
</svg>
<!-- popup -->
<div class="a" style="left:1706px;top:954px;width:120px;height:88px;background:#2e2e2e;border:1px solid #444;box-sizing:border-box"></div>
<svg class="a" style="left:1713px;top:962px" width="106" height="72" viewBox="1713 962 106 72">
<rect x="1713" y="962" width="106" height="72" fill="#1f1f1f"/>
<circle cx="1734" cy="982" r="7" fill="#ddd" stroke="#fff" stroke-dasharray="2 1" stroke-width="2"/><circle cx="1734" cy="982" r="4" fill="#e02020"/>
<rect x="1759" y="974" width="15" height="16" rx="4" fill="#fff"/><circle cx="1766.500" cy="982" r="5" fill="#111"/><path d="M1763 982h7" stroke="#fff" stroke-width="1.500"/>
<rect x="1791" y="974" width="14" height="7" fill="#108a80"/><path d="M1800 979l4 11h-4z" fill="#ddd"/>
<path d="M1741 1002c-6 2-11 9-11 18l-2 3 3-2c7-2 10-10 10-19z" fill="#8a5ad0"/><path d="M1734 1024c-3 3-3 7-4 9h8c-1-3-2-6-4-9z" fill="#8a9ab0"/>
<rect x="1759" y="1006" width="15" height="16" fill="#f03a30"/><path d="M1766 1009l-3 5 3 5 3-5z" fill="#fff"/>
</svg>
</body></html>
